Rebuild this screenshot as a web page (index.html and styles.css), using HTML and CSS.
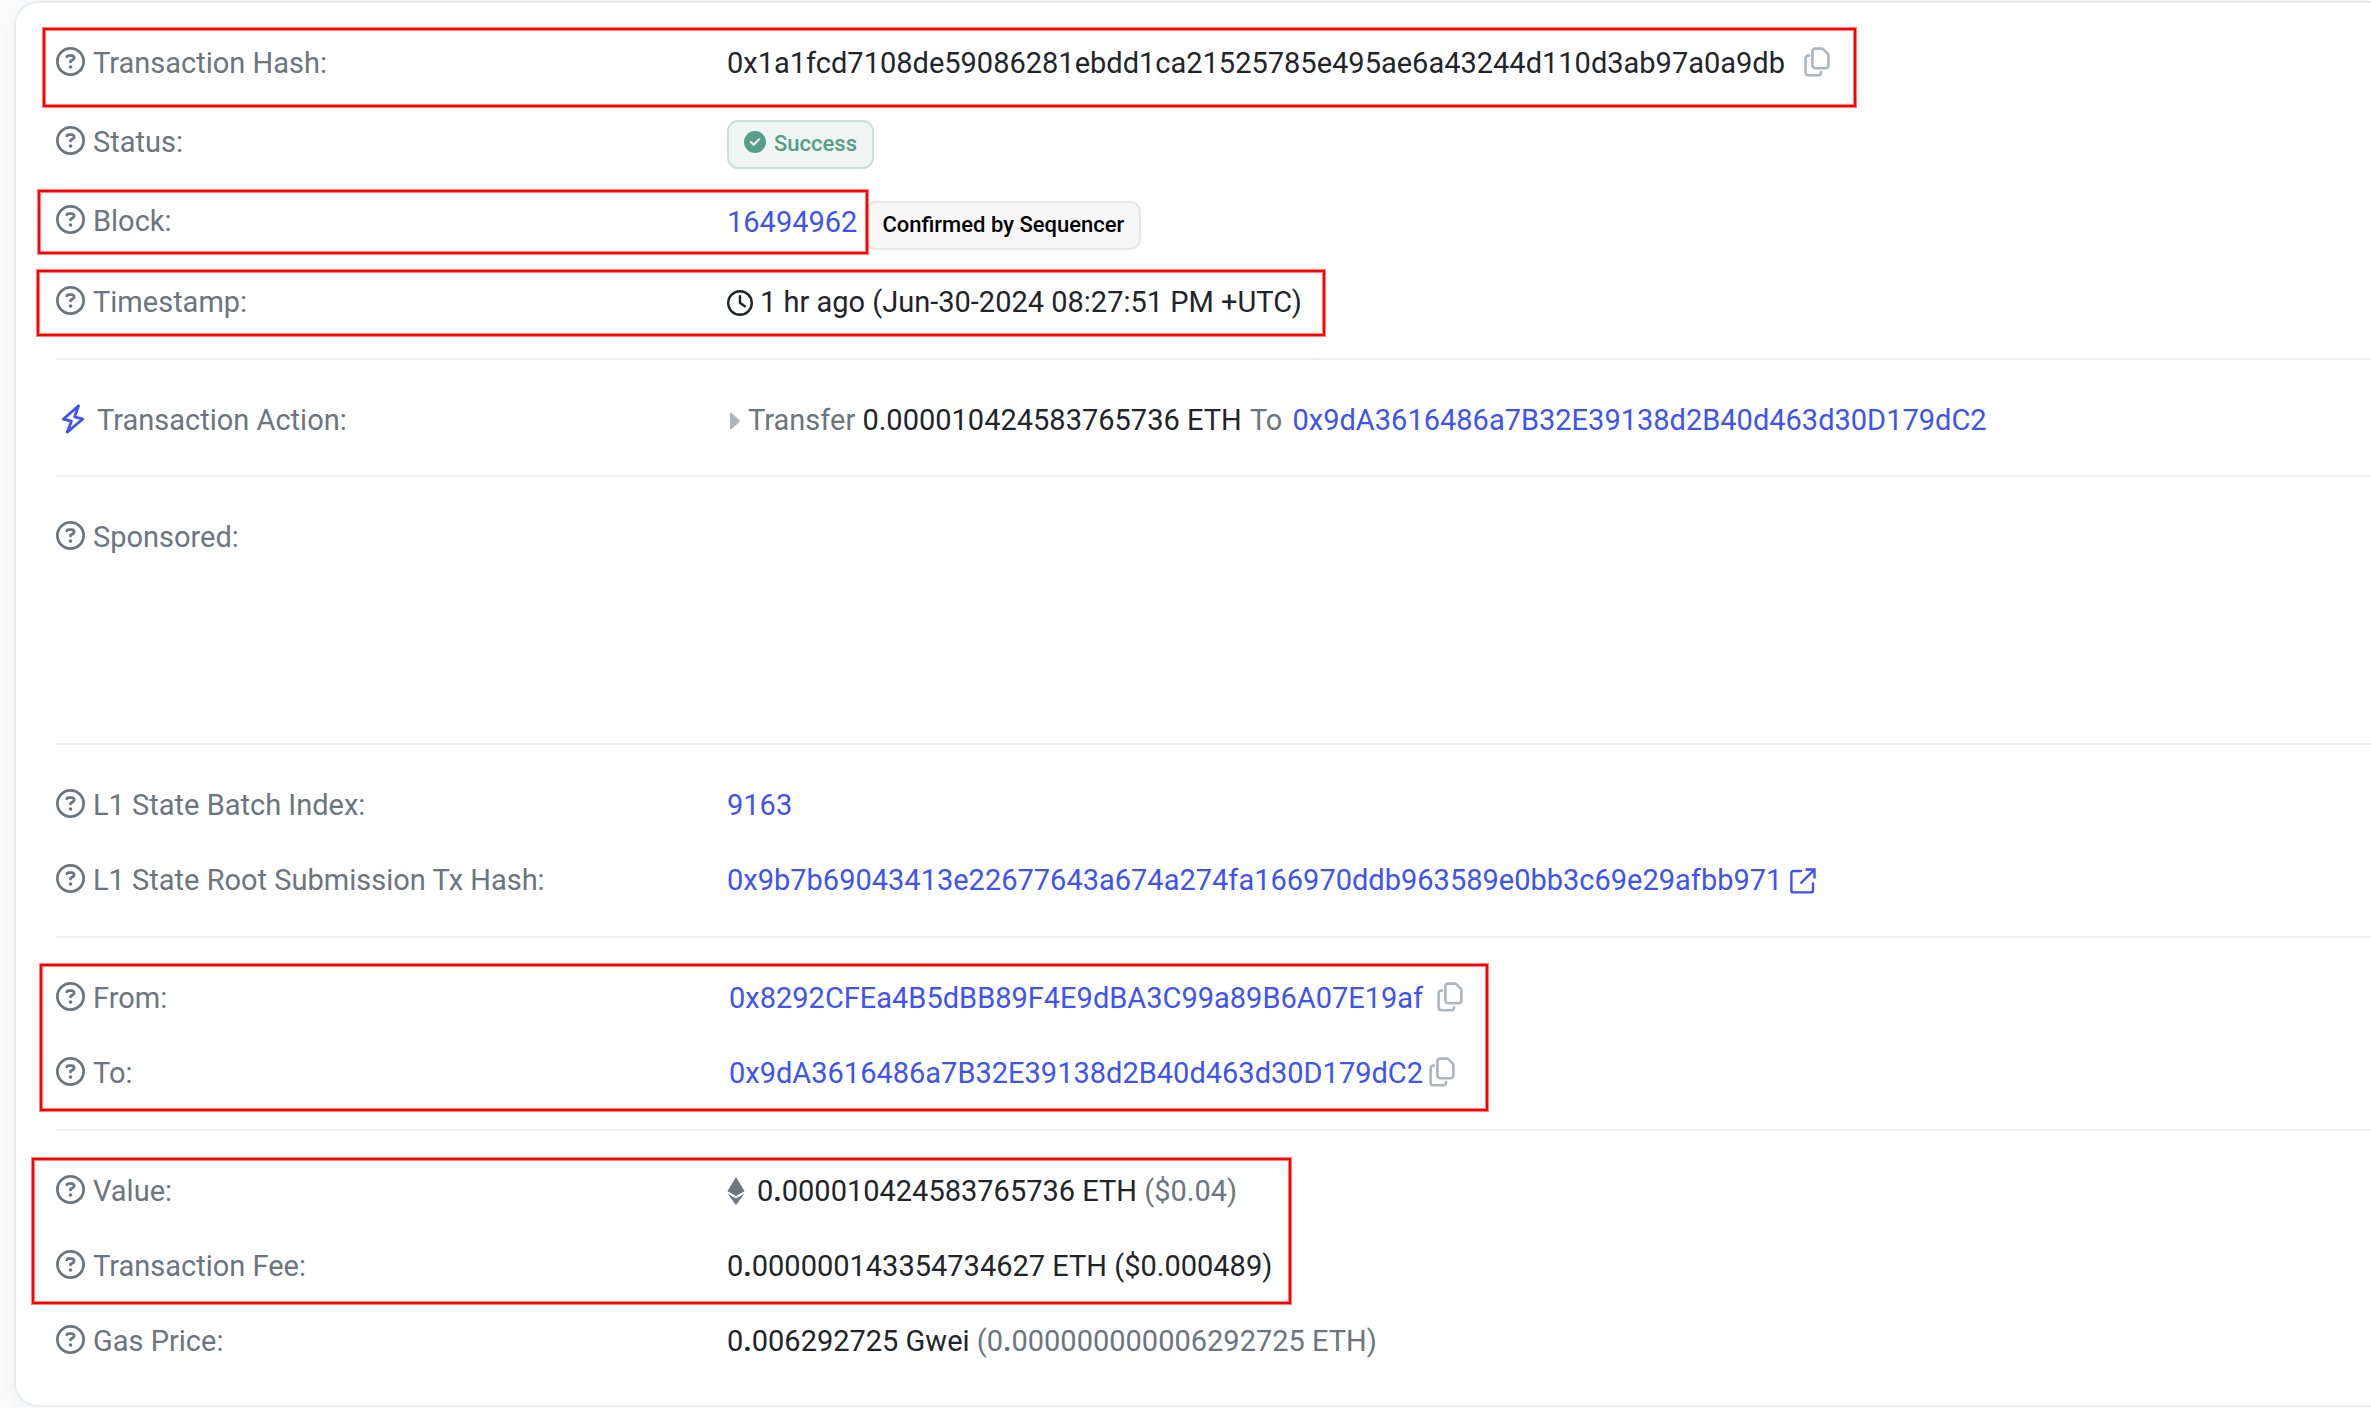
FILE: index.html
```html
<!DOCTYPE html>
<html lang="en">
<head>
  <meta charset="UTF-8">
  <meta name="viewport" content="width=device-width, initial-scale=1.0">
  <title>Transaction Details</title>
  <link rel="stylesheet" href="styles.css">
</head>
<body>
  <!-- shared icons -->
  <svg class="icon-defs" aria-hidden="true">
    <symbol id="icon-help" viewBox="0 0 512 512">
      <path fill="currentColor" d="M464 256A208 208 0 1 0 48 256a208 208 0 1 0 416 0zM0 256a256 256 0 1 1 512 0A256 256 0 1 1 0 256zm169.8-90.7c7.9-22.3 29.1-37.3 52.8-37.3h58.3c34.9 0 63.1 28.3 63.1 63.1c0 22.6-12.1 43.5-31.7 54.8L280 264.4c-.2 13-10.9 23.6-24 23.6c-13.3 0-24-10.7-24-24V250.5c0-8.6 4.6-16.5 12.1-20.8l44.3-25.4c4.7-2.7 7.6-7.7 7.6-13.1c0-8.4-6.8-15.1-15.1-15.1H222.6c-3.4 0-6.4 2.1-7.5 5.3l-.4 1.2c-4.4 12.5-18.2 19-30.6 14.6s-19-18.2-14.6-30.6l.4-1.2zM224 352a32 32 0 1 1 64 0 32 32 0 1 1 -64 0z"/>
    </symbol>
    <symbol id="icon-copy" viewBox="0 0 26 30">
      <g fill="none" stroke="currentColor" stroke-width="2.6" stroke-linejoin="round" stroke-linecap="round">
        <path d="M11 1.6h7.600l5.800 5.800v11.200a2.600 2.600 0 0 1-2.600 2.600H11a2.600 2.600 0 0 1-2.600-2.600V4.200A2.600 2.600 0 0 1 11 1.600z"/>
        <path d="M5 8.600H4.200a2.600 2.600 0 0 0-2.600 2.600v14.400a2.600 2.600 0 0 0 2.600 2.600h10.200a2.600 2.600 0 0 0 2.600-2.600V25"/>
      </g>
    </symbol>
  </svg>

  <main class="card">
    <section class="group group-overview">
      <div class="row">
        <div class="label"><svg class="icon-help"><use href="#icon-help"/></svg>Transaction Hash:</div>
        <div class="value">
          <span>0x1a1fcd7108de59086281ebdd1ca21525785e495ae6a43244d110d3ab97a0a9db</span>
          <button class="copy copy-wide" aria-label="Copy hash"><svg><use href="#icon-copy"/></svg></button>
        </div>
        <div class="mark mark-hash"></div>
      </div>
      <div class="row">
        <div class="label"><svg class="icon-help"><use href="#icon-help"/></svg>Status:</div>
        <div class="value">
          <span class="badge badge-success">
            <svg class="icon-check" viewBox="0 0 512 512"><path fill="currentColor" d="M256 512A256 256 0 1 0 256 0a256 256 0 1 0 0 512zM369 209L241 337c-9.4 9.4-24.6 9.4-33.9 0l-64-64c-9.4-9.4-9.4-24.6 0-33.9s24.6-9.4 33.9 0l47 47L335 175c9.4-9.4 24.6-9.4 33.9 0s9.4 24.6 0 33.9z"/></svg>
            Success
          </span>
        </div>
      </div>
      <div class="row">
        <div class="label"><svg class="icon-help"><use href="#icon-help"/></svg>Block:</div>
        <div class="value value-block">
          <a href="#">16494962</a>
          <span class="badge badge-plain">Confirmed by Sequencer</span>
        </div>
        <div class="mark mark-block"></div>
      </div>
      <div class="row">
        <div class="label"><svg class="icon-help"><use href="#icon-help"/></svg>Timestamp:</div>
        <div class="value">
          <svg class="icon-clock" viewBox="0 0 512 512"><path fill="currentColor" d="M464 256A208 208 0 1 1 48 256a208 208 0 1 1 416 0zM0 256a256 256 0 1 0 512 0A256 256 0 1 0 0 256zM232 120V256c0 8 4 15.5 10.7 20l96 64c11 7.4 25.9 4.4 33.3-6.7s4.4-25.9-6.7-33.3L280 243.2V120c0-13.3-10.7-24-24-24s-24 10.7-24 24z"/></svg>
          <span>1 hr ago (Jun-30-2024 08:27:51 PM +UTC)</span>
        </div>
        <div class="mark mark-time"></div>
      </div>
    </section>

    <section class="group group-action">
      <div class="row">
        <div class="label label-action">
          <svg class="icon-bolt" viewBox="0 0 24 30"><path fill="none" stroke="currentColor" stroke-width="2.8" stroke-linejoin="round" d="M17.6 1.8L2.2 15.2l8.2 2-4.2 11L21.8 15l-8.2-2.2z"/></svg>Transaction Action:
        </div>
        <div class="value">
          <svg class="icon-caret" viewBox="0 0 10 18"><path fill="currentColor" d="M0 2.2C0 .8 1.2.4 2.2 1.4L9.3 8c.6.6.6 1.4 0 2L2.2 16.6C1.2 17.6 0 17.2 0 15.8z"/></svg>
          <span><span class="muted">Transfer</span> 0.000010424583765736 ETH <span class="muted to">To</span> <a href="#">0x9dA3616486a7B32E39138d2B40d463d30D179dC2</a></span>
        </div>
      </div>
    </section>

    <section class="group group-sponsored">
      <div class="row">
        <div class="label"><svg class="icon-help"><use href="#icon-help"/></svg>Sponsored:</div>
      </div>
    </section>

    <section class="group">
      <div class="row">
        <div class="label"><svg class="icon-help"><use href="#icon-help"/></svg>L1 State Batch Index:</div>
        <div class="value"><a href="#">9163</a></div>
      </div>
      <div class="row">
        <div class="label"><svg class="icon-help"><use href="#icon-help"/></svg>L1 State Root Submission Tx Hash:</div>
        <div class="value">
          <a class="external" href="#">0x9b7b69043413e22677643a674a274fa166970ddb963589e0bb3c69e29afbb971
            <svg class="icon-external" viewBox="0 0 26 26"><g fill="none" stroke="currentColor" stroke-width="2.4" stroke-linejoin="round"><path stroke-linecap="round" d="M11 3H3.4A2 2 0 0 0 1.4 5v17.4a2 2 0 0 0 2 2H21a2 2 0 0 0 2-2V15.500"/><path stroke-linejoin="miter" d="M15.500 1.500H24.500V10.500M24.200 1.800L10.500 15.500"/></g></svg>
          </a>
        </div>
      </div>
    </section>

    <section class="group">
      <div class="row">
        <div class="label"><svg class="icon-help"><use href="#icon-help"/></svg>From:</div>
        <div class="value value-address">
          <a href="#">0x8292CFEa4B5dBB89F4E9dBA3C99a89B6A07E19af</a>
          <button class="copy copy-mid" aria-label="Copy sender"><svg><use href="#icon-copy"/></svg></button>
        </div>
        <div class="mark mark-parties"></div>
      </div>
      <div class="row">
        <div class="label"><svg class="icon-help"><use href="#icon-help"/></svg>To:</div>
        <div class="value value-address">
          <a href="#">0x9dA3616486a7B32E39138d2B40d463d30D179dC2</a>
          <button class="copy" aria-label="Copy recipient"><svg><use href="#icon-copy"/></svg></button>
        </div>
      </div>
    </section>

    <section class="group">
      <div class="row">
        <div class="label"><svg class="icon-help"><use href="#icon-help"/></svg>Value:</div>
        <div class="value">
          <svg class="icon-eth" viewBox="0 0 18 28"><path fill="currentColor" d="M9 0l8.500 14.200L9 19 .5 14.200zM.5 16.600L9 21.400l8.500-4.800L9 28z"/></svg>
          <span>0<b>.</b>000010424583765736 ETH <span class="muted">($0.04)</span></span>
        </div>
        <div class="mark mark-amounts"></div>
      </div>
      <div class="row">
        <div class="label"><svg class="icon-help"><use href="#icon-help"/></svg>Transaction Fee:</div>
        <div class="value"><span>0<b>.</b>000000143354734627 ETH ($0.000489)</span></div>
      </div>
      <div class="row">
        <div class="label"><svg class="icon-help"><use href="#icon-help"/></svg>Gas Price:</div>
        <div class="value"><span>0<b>.</b>006292725 Gwei <span class="muted">(0<b>.</b>000000000006292725 ETH)</span></span></div>
      </div>
    </section>
  </main>
</body>
</html>
```
FILE: styles.css
```css
* {
  box-sizing: border-box;
}
body {
  margin: 0;
  padding: 1px 0 0 14px;
  background-color: #fcfcfd;
  color: #212529;
  font-family: Roboto, "Liberation Sans", sans-serif;
  font-size: 29px;
  line-height: 44px;
  overflow-x: hidden;
}
a {
  color: #3e53f5;
  text-decoration: none;
}
svg {
  display: block;
  flex: none;
}
.icon-defs {
  position: absolute;
  width: 0;
  height: 0;
}
.card {
  padding: 0 0 8px 40px;
  background-color: white;
  border: 2px solid #e9ecef;
  border-right: none;
  border-radius: 24px 0 0 24px;
  box-shadow: 0 8px 24px rgba(33, 37, 80, 0.05);
}
.group {
  display: flex;
  flex-direction: column;
  gap: 31px;
  padding: 38px 0 34px;
  border-top: 2px solid #f0f0f1;
}
.group-overview {
  gap: 30px;
  border-top: none;
}
.group-overview .row {
  min-height: 49px;
}
.group-overview .row:last-child {
  min-height: 44px;
}
.group-action {
  padding-bottom: 33px;
}
.group-sponsored {
  min-height: 268px;
}
.row {
  position: relative;
  display: grid;
  grid-template-columns: 671px 1fr;
  align-items: start;
}
.label {
  display: flex;
  gap: 8px;
  color: #6c757d;
}
.label-action {
  gap: 12px;
  padding-left: 5px;
}
.value {
  display: flex;
  align-items: flex-start;
  white-space: nowrap;
}
.value-block {
  gap: 8px;
  padding-top: 2px;
}
.value-block a {
  line-height: 42px;
}
.value-address {
  padding-left: 2px;
}
.muted {
  color: #6c757d;
}
.to {
  margin: 0 3px 0 1px;
}

/* badges */
.badge {
  display: flex;
  gap: 8px;
  height: 49px;
  padding: 9px 15px;
  border: 2px solid;
  border-radius: 11px;
  font-size: 22px;
  font-weight: 500;
  line-height: 25px;
}
.badge-success {
  background-color: #eef5f3;
  border-color: #c8e0d8;
  color: #569e87;
}
.badge-plain {
  background-color: #f7f7f7;
  border-color: #e6e6ea;
  color: #000;
}

/* icons */
.icon-help {
  width: 29px;
  height: 29px;
  margin-top: 6px;
  color: #6c757d;
}
.icon-bolt {
  width: 24px;
  height: 30px;
  margin-top: 6px;
  color: #3e53f5;
}
.icon-check {
  width: 22px;
  height: 22px;
}
.icon-clock {
  width: 26px;
  height: 26px;
  margin: 10px 7px 0 0;
}
.icon-caret {
  width: 10px;
  height: 18px;
  margin: 14px 8px 0 3px;
  color: #adb5bd;
}
.icon-eth {
  width: 18px;
  height: 28px;
  margin: 8px 12px 0 0;
  color: #6c757d;
}
.external {
  display: flex;
  gap: 8px;
}
.icon-external {
  width: 26px;
  height: 26px;
  margin-top: 10px;
}
.copy {
  margin: 6px 0 0 6px;
  padding: 0;
  background: none;
  border: none;
  color: #adb5bd;
  cursor: pointer;
}
.copy svg {
  width: 26px;
  height: 30px;
}
.copy-mid {
  margin-left: 14px;
}
.copy-wide {
  margin-left: 19px;
}

/* red frames over the rows */
.mark {
  position: absolute;
  border: 2px solid #f00;
  box-shadow: 0 0 0 1px rgba(255, 0, 0, 0.5), inset 0 0 0 1px rgba(255, 0, 0, 0.5);
  pointer-events: none;
}
.mark-hash {
  top: -13px;
  left: -13px;
  width: 1813px;
  height: 79px;
}
.mark-block {
  top: -9px;
  left: -18px;
  width: 830px;
  height: 64px;
}
.mark-time {
  top: -10px;
  left: -19px;
  width: 1288px;
  height: 66px;
}
.mark-parties {
  top: -12px;
  left: -16px;
  width: 1448px;
  height: 147px;
}
.mark-amounts {
  top: -11px;
  left: -24px;
  width: 1259px;
  height: 146px;
}
```
